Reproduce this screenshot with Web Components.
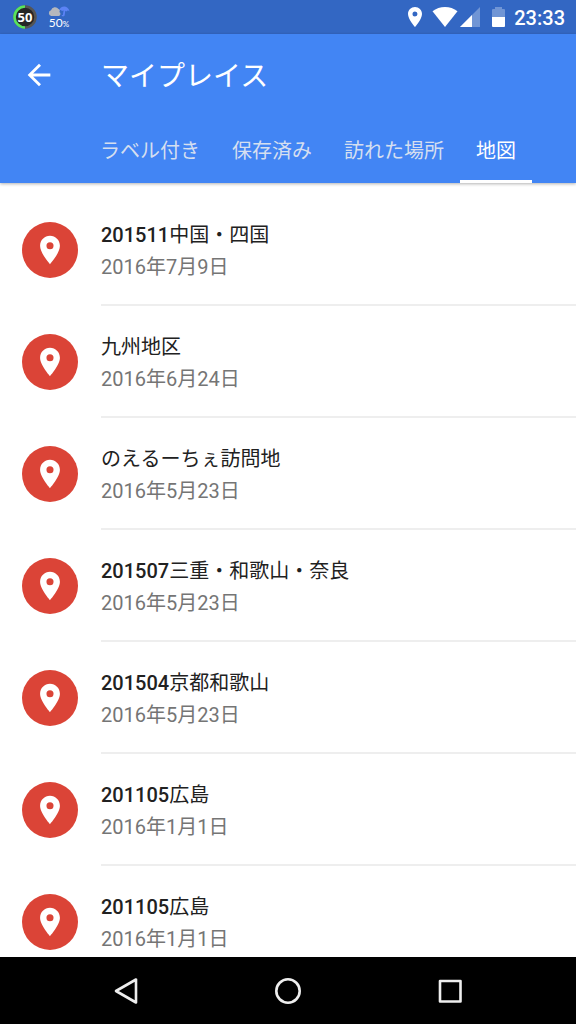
<!DOCTYPE html>
<html lang="ja">
<head>
<meta charset="utf-8">
<meta name="viewport" content="width=device-width, initial-scale=1">
<title>マイプレイス</title>
<style>
  body { margin: 0; background: #fff; font-family: Roboto, "Noto Sans CJK JP", sans-serif; }
</style>
</head>
<body>
<places-screen></places-screen>

<template id="status-bar">
  <style>
    :host { display: flex; align-items: center; height: 34px; padding: 0 11px 0 12px; background: #3367c3; color: #fff; flex: none; }
    svg { display: block; }
    .badge { display: grid; place-items: center; width: 26px; height: 26px; }
    .badge > * { grid-area: 1 / 1; }
    .badge span { font: 700 13px/16px "Noto Sans", sans-serif; z-index: 1; }
    .weather { display: flex; flex-direction: column; align-items: center; margin-left: 10px; padding-top: 1px; }
    .weather span { font: 12px/12px Lato, sans-serif; }
    .weather small { font-size: 8px; }
    .fill { flex: 1; }
    .battery { margin-left: 12px; }
    time { font-size: 20px; line-height: 24px; font-weight: 500; margin-left: 9px; padding-top: 1px; }
  </style>
  <div class="badge">
    <svg width="26" height="26" viewBox="0 0 26 26" fill="none">
      <circle cx="13" cy="13" r="10.500" fill="#262626" stroke="#555" stroke-width="2.500"/>
      <path d="M13 2.500a10.500 10.500 0 0 0 0 21" stroke="#58e45c" stroke-width="2.600"/>
    </svg>
    <span>50</span>
  </div>
  <div class="weather">
    <svg width="22" height="11" viewBox="0 0 22 11">
      <path d="M3.200 10A3 3 0 0 1 3 4.200 4.200 4.200 0 0 1 10.500 3a2 2 0 0 1 .8 3A2.200 2.200 0 0 1 11 10Z" fill="#b5b8bd"/>
      <path d="M11 4.500C11.500 2 14 .4 16.200.4S21 2 21.500 5.500c-1-1.200-2.200-1.200-3 0l-1.200-.8-.6 4.300c-.3 2-3.200 1.800-3 0h1.200l.7-4.500-1.600.5c-.8-1-2-1.300-3-.5Z" fill="#5c83f5"/>
    </svg>
    <span>50<small>%</small></span>
  </div>
  <div class="fill"></div>
  <svg width="24" height="24" viewBox="0 0 24 24" fill="#fff"><path d="M12 2C8.100 2 5 5.100 5 9c0 5.250 7 13 7 13s7-7.750 7-13c0-3.900-3.100-7-7-7zm0 9.500a2.500 2.500 0 1 1 0-5 2.500 2.500 0 0 1 0 5z"/></svg>
  <svg style="margin-left:5px" width="26" height="20" viewBox="0 0 26 20" fill="#fff"><path d="M13 20 .5 4.300C4 1.500 8.500 0 13 0s9 1.500 12.500 4.300Z"/></svg>
  <svg style="margin-left:2px" width="20" height="20" viewBox="0 0 20 20" fill="#fff"><path d="M0 20 20 0v20Z" opacity=".3"/><path d="M0 20 12 8v12Z"/></svg>
  <svg class="battery" width="13" height="20" viewBox="0 0 13 20" fill="#fff"><path d="M0 10V3q0-1 1-1h2V0h7v2h2q1 0 1 1v7Z" opacity=".3"/><path d="M0 10h13v9q0 1-1 1H1q-1 0-1-1Z"/></svg>
  <time>23:33</time>
</template>

<template id="app-bar">
  <style>
    :host { display: block; flex: none; background: #4285f4; color: #fff; box-shadow: 0 1px 3px rgba(0,0,0,.3); z-index: 1; }
    .toolbar { display: flex; align-items: center; height: 82px; padding-left: 22px; gap: 45px; }
    button { border: 0; padding: 0; background: none; color: inherit; }
    svg { display: block; }
    h1 { margin: 0; padding-top: 4px; font-size: 28px; line-height: 40px; font-weight: 400; }
    nav { display: flex; padding-left: 84px; }
  </style>
  <div class="toolbar">
    <button aria-label="戻る"><svg width="34" height="34" viewBox="0 0 24 24" fill="#fff"><path d="M20 11H7.830l5.590-5.590L12 4l-8 8 8 8 1.410-1.410L7.830 13H20v-2z"/></svg></button>
    <h1><slot name="title"></slot></h1>
  </div>
  <nav role="tablist"><slot></slot></nav>
</template>

<template id="app-tab">
  <style>
    :host { display: block; }
    button { display: block; height: 67px; padding: 5px 16px 0; border: 0; border-bottom: 3px solid transparent; background: none; color: #d5dff0; font: inherit; font-size: 20px; line-height: 28px; white-space: nowrap; }
    :host([selected]) button { color: #fff; border-color: #fff; }
  </style>
  <button role="tab"><slot></slot></button>
</template>

<template id="place-item">
  <style>
    :host { display: flex; align-items: stretch; height: 112px; padding-left: 22px; gap: 23px; }
    .pin { align-self: center; display: grid; place-items: center; width: 56px; height: 56px; border-radius: 50%; background: #db4437; flex: none; }
    .text { flex: 1; display: flex; flex-direction: column; justify-content: center; box-sizing: border-box; padding-top: 4px; border-bottom: 2px solid #eee; font-size: 20px; line-height: 32px; color: #757575; white-space: nowrap; }
    .title { color: #212121; }
    ::slotted(b) { font-weight: 500; }
  </style>
  <span class="pin"><svg width="34" height="34" viewBox="0 0 24 24" fill="#fff"><path d="M12 2C8.130 2 5 5.130 5 9c0 5.250 7 13 7 13s7-7.750 7-13c0-3.870-3.130-7-7-7zm0 9.500a2.500 2.500 0 1 1 0-5 2.500 2.500 0 0 1 0 5z"/></svg></span>
  <div class="text"><span class="title"><slot></slot></span><span><slot name="date"></slot></span></div>
</template>

<template id="nav-bar">
  <style>
    :host { display: flex; justify-content: center; flex: none; height: 67px; background: #000; z-index: 1; }
    button { width: 162px; border: 0; padding: 0; background: none; display: grid; place-items: center; }
    svg { display: block; }
  </style>
  <button aria-label="戻る"><svg width="28" height="28" viewBox="0 0 28 28" fill="none" stroke="#eee" stroke-width="2.600" stroke-linejoin="round"><path d="M24 2.500v23L4 14Z"/></svg></button>
  <button aria-label="ホーム"><svg width="28" height="28" viewBox="0 0 28 28" fill="none" stroke="#eee" stroke-width="2.600"><circle cx="14" cy="14" r="11.700"/></svg></button>
  <button aria-label="最近使ったアプリ"><svg width="28" height="28" viewBox="0 0 28 28" fill="none" stroke="#eee" stroke-width="2.600" stroke-linejoin="round"><path d="M4 4h20.500v20.500H4Z"/></svg></button>
</template>

<template id="places-screen">
  <style>
    :host { display: flex; flex-direction: column; height: 100vh; }
    main { flex: 1; min-height: 0; overflow-y: auto; scrollbar-width: none; padding-top: 11px; box-sizing: border-box; }
  </style>
  <status-bar></status-bar>
  <app-bar>
    <span slot="title">マイプレイス</span>
    <app-tab>ラベル付き</app-tab>
    <app-tab>保存済み</app-tab>
    <app-tab>訪れた場所</app-tab>
    <app-tab selected>地図</app-tab>
  </app-bar>
  <main>
    <place-item><b>201511</b>中国・四国<span slot="date">2016年7月9日</span></place-item>
    <place-item>九州地区<span slot="date">2016年6月24日</span></place-item>
    <place-item>のえるーちぇ訪問地<span slot="date">2016年5月23日</span></place-item>
    <place-item><b>201507</b>三重・和歌山・奈良<span slot="date">2016年5月23日</span></place-item>
    <place-item><b>201504</b>京都和歌山<span slot="date">2016年5月23日</span></place-item>
    <place-item><b>201105</b>広島<span slot="date">2016年1月1日</span></place-item>
    <place-item><b>201105</b>広島<span slot="date">2016年1月1日</span></place-item>
  </main>
  <nav-bar></nav-bar>
</template>

<script>
  for (const name of ['status-bar', 'app-tab', 'app-bar', 'place-item', 'nav-bar', 'places-screen']) {
    customElements.define(name, class extends HTMLElement {
      constructor() {
        super();
        this.attachShadow({ mode: 'open' }).append(document.getElementById(name).content.cloneNode(true));
      }
    });
  }
</script>
</body>
</html>
